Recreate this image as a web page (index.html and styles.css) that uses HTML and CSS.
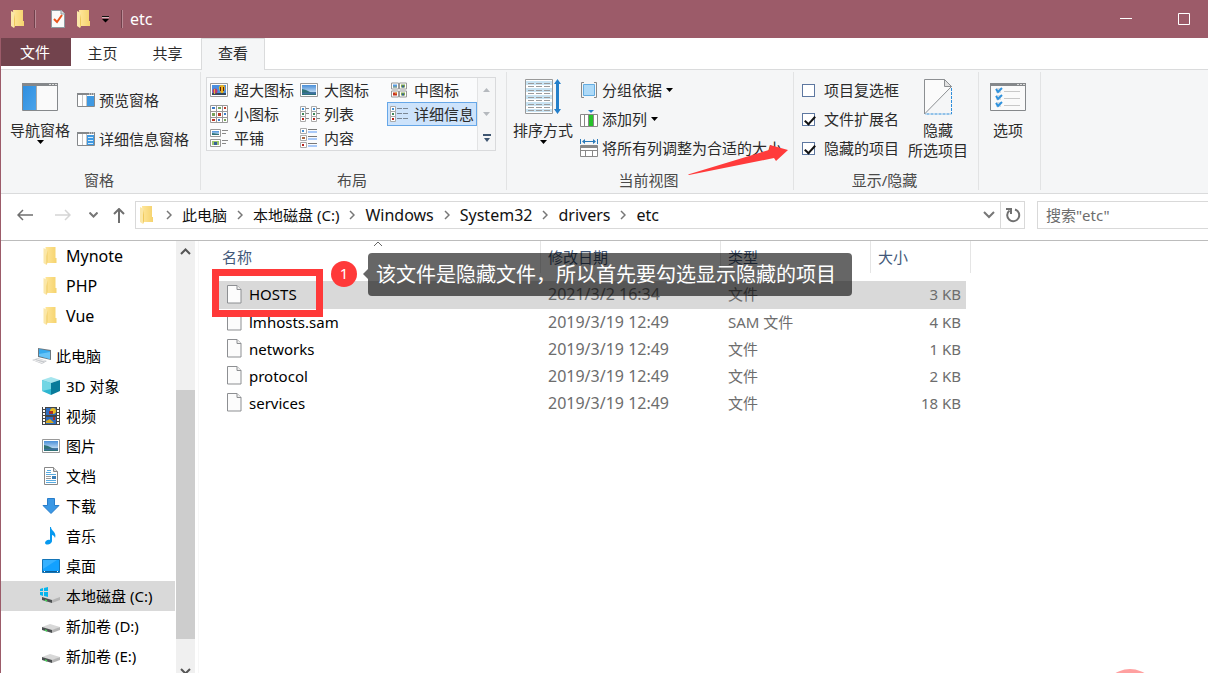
FILE: index.html
```
<!DOCTYPE html>
<html lang="zh-CN">
<head>
<meta charset="utf-8">
<title>etc</title>
<link rel="stylesheet" href="styles.css">
</head>
<body>
<svg class="defs" aria-hidden="true">
  <defs>
    <linearGradient id="gold" x1="0" x2="1" y1="0" y2="0"><stop offset="0" stop-color="#ffe69a"/><stop offset="1" stop-color="#f5d36e"/></linearGradient>
    <linearGradient id="sky" x1="0" x2="0" y1="0" y2="1"><stop offset="0" stop-color="#4a8fd8"/><stop offset="1" stop-color="#e8f4fb"/></linearGradient>
    <linearGradient id="blue" x1="0" x2="1" y1="0" y2="1"><stop offset="0" stop-color="#2f8fe0"/><stop offset="1" stop-color="#4aa3ea"/></linearGradient>
    <symbol id="folder" viewBox="0 0 13 18"><path d="M2 0h10v11h1v5H3z" fill="url(#gold)"/><path d="M0 1l4 2v13l-1 2-3-2z" fill="#fbe7a8"/><path d="M4 3v12l-1 3V9z" fill="#efc95c"/></symbol>
    <symbol id="file" viewBox="0 0 15 19"><path d="M.5.5h9.500l4 4v13.500H.5z" fill="#fcfcfc" stroke="#8d8f92"/><path d="M10 .5v4h4" fill="#eee" stroke="#8d8f92"/></symbol>
    <symbol id="picture" viewBox="0 0 18 14"><path d="M.5.5h17v13H.5z" fill="#fff" stroke="#999"/><path d="M2 2h14v10H2z" fill="url(#sky)"/><path d="M2 6l4 1 4 2 6 1v2H2z" fill="#2f7277"/><path d="M2 10l14-1v2H2z" fill="#3d6f9f"/></symbol>
    <symbol id="balloons" viewBox="0 0 18 14"><path d="M.5.5h17v13H.5z" fill="#fff" stroke="#999"/><path d="M2 2h14v10H2z" fill="#4a8fe0"/><path d="M2 10h14v2H2z" fill="#36475a"/><path d="M9 5q0-3 3-3t3 3q0 2-2 5h-2Q9 7 9 5z" fill="#edb21c"/><path d="M10 4h1v4h-1zM13 4h1v4h-1z" fill="#5a1f1a"/><circle cx="5" cy="8" r="2.500" fill="#c23c6b"/><path d="M4 6h1v5H4z" fill="#d7b53d"/></symbol>
    <symbol id="tile" viewBox="0 0 8 7"><path d="M.5.5h7v6h-7z" fill="#fff" stroke="#999"/><path d="M2 2h4v2H2z" fill="#559be3"/><path d="M2 4h4v1H2z" fill="#366f63"/></symbol>
    <symbol id="tilered" viewBox="0 0 8 7"><path d="M.5.5h7v6h-7z" fill="#fff" stroke="#999"/><path d="M2 2h4v3H2z" fill="#c6331e"/><path d="M4 2h2v1H4z" fill="#e6b93a"/></symbol>
    <symbol id="tilegreen" viewBox="0 0 8 7"><path d="M.5.5h7v6h-7z" fill="#fff" stroke="#999"/><path d="M2 2h4v3H2z" fill="#82aa4d"/><path d="M3 3h2v2H3z" fill="#365f98"/></symbol>
    <symbol id="medium" viewBox="0 0 18 16"><use href="#tile" x="1" y="0" width="8" height="8"/><use href="#tilegreen" x="9" y="0" width="8" height="8"/><use href="#tilered" x="1" y="8" width="8" height="8"/><use href="#tilegreen" x="9" y="8" width="8" height="8"/></symbol>
    <symbol id="small" viewBox="0 0 18 18"><path d="M.5.5h17v17H.5zM6.500 0v18M12.500 0v18M0 6.500h18M0 12.500h18" fill="#fff" stroke="#999"/><path d="M2 2h3v2H2zM14 8h2v2h-2zM8 14h2v2H8z" fill="#3b7bc7"/><path d="M8 2h3v2H8zM2 8h3v3H2zM14 14h2v2h-2z" fill="#76a35b"/><path d="M14 2h2v2h-2zM8 8h3v3H8zM2 14h3v2H2z" fill="#ba3928"/></symbol>
    <symbol id="list" viewBox="0 0 20 18"><path d="M.5 1.500h5v5h-5zM.5 6.500h5v5h-5zM.5 11.500h5v5h-5zM11.500 1.500h5v5h-5zM11.500 6.500h5v5h-5zM11.500 11.500h5v5h-5z" fill="#fff" stroke="#aaa"/><path d="M2 3h2v2H2zM13 3h2v2h-2z" fill="#438fd4"/><path d="M2 8h2v2H2zM13 8h2v2h-2z" fill="#41885a"/><path d="M2 13h2v2H2zM13 13h2v2h-2z" fill="#b8251c"/><path d="M6 3.500h3M6 8.500h3M6 13.500h3M17 3.500h3M17 8.500h3M17 13.500h3" stroke="#888"/></symbol>
    <symbol id="details" viewBox="0 0 18 18"><path d="M.5 1.500h5v5h-5zM.5 6.500h5v5h-5zM.5 11.500h5v5h-5z" fill="#fff" stroke="#aaa"/><path d="M2 3h2v2H2z" fill="#438fd4"/><path d="M2 8h2v2H2z" fill="#41885a"/><path d="M2 13h2v2H2z" fill="#b8251c"/><path d="M7 3.500h5M13 3.500h5M7 8.500h5M13 8.500h5M7 13.500h5M13 13.500h5" stroke="#7b8794"/></symbol>
    <symbol id="tiles" viewBox="0 0 18 20"><path d="M.5 1.500h10v7H.5zM.5 11.500h10v7H.5z" fill="#fff" stroke="#999"/><path d="M2 3h7v4H2z" fill="url(#sky)"/><path d="M2 5l7 1v1H2z" fill="#2f7277"/><path d="M2 13h7v4H2z" fill="#9cc46a"/><path d="M4 14h3v3H4z" fill="#365f98"/><path d="M12 2.500h6M12 5.500h4M12 12.500h6M12 15.500h4" stroke="#888"/></symbol>
    <symbol id="content" viewBox="0 0 18 20"><path d="M.5.500h6v5h-6zM.5 7.500h6v5h-6zM.5 14.500h6v5h-6z" fill="#fff" stroke="#aaa"/><path d="M2 2h2v2H2z" fill="#438fd4"/><path d="M2 9h3v2H2z" fill="#aa6a43"/><path d="M2 16h2v2H2z" fill="#b8251c"/><path d="M8 1.500h9M8 8.500h9M8 15.500h9" stroke="#777"/><path d="M8 4h9M8 11h9M8 18h9" stroke="#5697f5"/></symbol>
    <symbol id="crumb" viewBox="0 0 6 10"><path d="M1 1l4 4-4 4" fill="none" stroke="#777" stroke-width="1.500"/></symbol>
    <symbol id="caret" viewBox="0 0 7 4"><path d="M0 0h7L3.500 4z"/></symbol>
    <symbol id="drive" viewBox="0 0 18 12"><path d="M0 5l8-3 10 3-8 4z" fill="#d8d8d8"/><path d="M0 5l10 3v3L0 8z" fill="#4b4f50"/><path d="M10 8l8-3v3l-8 3z" fill="#b5b5b5"/><path d="M3 8l2 1" stroke="#48d05a" stroke-width="1.500"/></symbol>
  </defs>
</svg>
<div class="window">
  <header class="titlebar">
    <svg width="13" height="18"><use href="#folder"/></svg>
    <span class="divider"></span>
    <button class="quick" aria-label="属性"><svg width="14" height="18" viewBox="0 0 14 18"><path d="M.5.5h9.500l3.500 3.500v13.500H.5z" fill="#fafafa" stroke="#8f9aa0"/><path d="M10 0v4h4" fill="#d8dfe2" stroke="#8f9aa0"/><path d="M3 9l3 3 5-7" fill="none" stroke="#e8541d" stroke-width="2"/></svg></button>
    <button class="quick" aria-label="新建文件夹"><svg width="13" height="18"><use href="#folder"/></svg></button>
    <button class="quick customize" aria-label="自定义快速访问工具栏"><svg width="7" height="7" viewBox="0 0 7 7"><path d="M0 .5h7" stroke="#111"/><path d="M0 1.500h7" stroke="#d8b9bf"/><path d="M0 3h7L3.500 6.500z" fill="#000"/></svg></button>
    <span class="divider"></span>
    <h1 class="title">etc</h1>
    <div class="window-buttons">
      <button aria-label="最小化"><svg width="12" height="12" viewBox="0 0 12 12"><path d="M0 5.500h12" stroke="#fff"/></svg></button>
      <button aria-label="最大化"><svg width="12" height="12" viewBox="0 0 12 12"><path d="M.5.5h11v11H.5z" fill="none" stroke="#fff"/></svg></button>
    </div>
  </header>

  <nav class="tabs">
    <button class="tab file">文件</button>
    <button class="tab">主页</button>
    <button class="tab">共享</button>
    <button class="tab active">查看</button>
  </nav>

  <section class="ribbon">
    <div class="group panes">
      <div class="group-body">
        <button class="big">
          <svg width="36" height="36" viewBox="0 0 36 36"><path d="M.5 4.500h35v27H.5z" fill="#fafafa" stroke="#85888b"/><path d="M0 4h36v3H0z" fill="#85888b"/><path d="M27 5.500h2M30 5.500h2M33 5.500h2" stroke="#ddd"/><path d="M1 7h13v24H1z" fill="url(#blue)"/><path d="M14.500 7v24" stroke="#aaa"/></svg>
          <span>导航窗格</span><svg width="7" height="4"><use href="#caret"/></svg>
        </button>
        <div class="stack wide">
          <button class="small-button"><svg width="18" height="14" viewBox="0 0 18 14"><path d="M.5.5h17v13H.5z" fill="#fff" stroke="#85888b"/><path d="M0 0h18v2H0z" fill="#85888b"/><path d="M12 1h1M14 1h1M16 1h1" stroke="#eee"/><path d="M5.500 2v11M9.500 2v11" stroke="#c5c5c5"/><path d="M10 3h7v10h-7z" fill="#3f99e2"/></svg>预览窗格</button>
          <button class="small-button"><svg width="18" height="14" viewBox="0 0 18 14"><path d="M.5.5h17v13H.5z" fill="#fff" stroke="#85888b"/><path d="M0 0h18v2H0z" fill="#85888b"/><path d="M12 1h1M14 1h1M16 1h1" stroke="#eee"/><path d="M5.500 2v11M9.500 2v11" stroke="#c5c5c5"/><path d="M10 3h7v10h-7z" fill="#3f99e2"/><path d="M11 5.500h5M11 8.500h5M11 11.500h5" stroke="#d6ebfa"/></svg>详细信息窗格</button>
        </div>
      </div>
      <h2>窗格</h2>
    </div>

    <div class="group layout">
      <div class="group-body">
        <div class="gallery">
          <div class="gallery-items">
            <button><svg width="18" height="14"><use href="#balloons"/></svg>超大图标</button>
            <button><svg width="18" height="14"><use href="#picture"/></svg>大图标</button>
            <button><svg width="18" height="16"><use href="#medium"/></svg>中图标</button>
            <button><svg width="18" height="18"><use href="#small"/></svg>小图标</button>
            <button class="overhang"><svg width="20" height="18"><use href="#list"/></svg>列表</button>
            <button class="chosen"><svg width="18" height="18"><use href="#details"/></svg>详细信息</button>
            <button><svg width="18" height="20"><use href="#tiles"/></svg>平铺</button>
            <button><svg width="18" height="20"><use href="#content"/></svg>内容</button>
          </div>
          <div class="gallery-scroll">
            <button aria-label="向上"><svg width="7" height="4" viewBox="0 0 7 4"><path d="M0 4h7L3.500 0z" fill="#b5b9be"/></svg></button>
            <button aria-label="向下"><svg width="7" height="4" viewBox="0 0 7 4"><path d="M0 0h7L3.500 4z" fill="#b5b9be"/></svg></button>
            <button aria-label="更多"><svg width="8" height="8" viewBox="0 0 8 8"><path d="M0 0h8v2H0zM1 4h6L4 8z" fill="#3f5671"/></svg></button>
          </div>
        </div>
      </div>
      <h2>布局</h2>
    </div>

    <div class="group current">
      <div class="group-body">
        <button class="big">
          <svg width="36" height="36" viewBox="0 0 36 36"><path d="M.5.5h27v34H.5z" fill="#fff" stroke="#999"/><path d="M1 2h26v4H1zM1 9h26v4H1zM1 16h26v4H1zM1 23h26v4H1zM1 30h26v3H1z" fill="#c9e4f3"/><path d="M3 4.500h22M3 7.500h22M3 11.500h22M3 14.500h22M3 18.500h22M3 21.500h22M3 25.500h22M3 28.500h22M3 31.500h22" stroke="#9c9c9c" stroke-dasharray="6 2"/><path d="M32.500 3v29" stroke="#237fca" stroke-width="3"/><path d="M29 5l3.500-5L36 5zM29 30l3.500 5 3.500-5z" fill="#237fca"/></svg>
          <span>排序方式</span><svg width="7" height="4"><use href="#caret"/></svg>
        </button>
        <div class="stack">
          <button class="small-button"><svg width="18" height="18" viewBox="0 0 18 18"><path d="M4 1.500H1.500v15H4M14 1.500h2.500v15H14" fill="none" stroke="#888"/><path d="M3.500 3.500h11v11h-11z" fill="#aedaf8" stroke="#63ade2"/></svg>分组依据<svg width="7" height="4"><use href="#caret"/></svg></button>
          <button class="small-button"><svg width="18" height="18" viewBox="0 0 18 18"><path d="M.5 4.500h17v12H.5zM4.500 4v13M8.500 4v13M13.500 4v13" fill="#fff" stroke="#888"/><path d="M9 5h4v11H9z" fill="#26c32a"/><path d="M8 0h6l-3 3z" fill="#287fc9"/></svg>添加列<svg width="7" height="4"><use href="#caret"/></svg></button>
          <button class="small-button"><svg width="18" height="18" viewBox="0 0 18 18"><path d="M.5 0v5M17.500 0v5M3 2.500h12" stroke="#2879b9"/><path d="M2 2.500L5 0v5zM16 2.500L13 0v5z" fill="#2879b9"/><path d="M.5 6.500h17v11H.5z" fill="#fff" stroke="#888"/><path d="M0 8h18" stroke="#888" stroke-width="2"/><path d="M5.500 11v7M12.500 11v7M1 11.500h16" stroke="#888"/></svg>将所有列调整为合适的大小</button>
        </div>
      </div>
      <h2>当前视图</h2>
    </div>

    <div class="group visibility">
      <div class="group-body">
        <div class="stack checks">
          <label><input type="checkbox">项目复选框</label>
          <label><input type="checkbox" checked>文件扩展名</label>
          <label><input type="checkbox" checked>隐藏的项目</label>
        </div>
        <button class="big">
          <svg width="30" height="36" viewBox="0 0 30 36"><path d="M1.500 35V.5h20l7 7z" fill="#fbfbfb" stroke="#8c8f92"/><path d="M21.500.5v7h7z" fill="#e2e2e2" stroke="#8c8f92"/><path d="M28.500 9v26H2" fill="none" stroke="#2f8edb" stroke-dasharray="3 1"/></svg>
          <span>隐藏</span><span>所选项目</span>
        </button>
      </div>
      <h2>显示/隐藏</h2>
    </div>

    <div class="group options">
      <div class="group-body">
        <button class="big">
          <svg width="36" height="36" viewBox="0 0 36 36"><path d="M.5 4.500h35v27H.5z" fill="#fafafa" stroke="#85888b"/><path d="M0 4h36v3H0z" fill="#85888b"/><path d="M27 5.500h2M30 5.500h2M33 5.500h2" stroke="#ddd"/><path d="M6 9h5v5H6zM6 16h5v5H6zM6 23h5v5H6z" fill="#d5dde4"/><path d="M6 10l2 3 4-4M6 17l2 3 4-4M6 24l2 3 4-4" fill="none" stroke="#2e92de" stroke-width="2"/><path d="M14 12.500h16M14 19.500h16M14 26.500h16" stroke="#c8c8c8"/></svg>
          <span>选项</span>
        </button>
      </div>
    </div>
  </section>

  <div class="location">
    <div class="history">
      <button aria-label="后退"><svg width="16" height="12" viewBox="0 0 16 12"><path d="M16 6H1M6 1L1 6l5 5" fill="none" stroke="#6f6f6f" stroke-width="1.500"/></svg></button>
      <button aria-label="前进"><svg width="16" height="12" viewBox="0 0 16 12"><path d="M0 6h15M10 1l5 5-5 5" fill="none" stroke="#d5d5d5" stroke-width="1.500"/></svg></button>
      <button class="recent" aria-label="最近浏览的位置"><svg width="9" height="6" viewBox="0 0 9 6"><path d="M.5.5l4 4 4-4" fill="none" stroke="#777" stroke-width="2"/></svg></button>
      <button class="up" aria-label="向上"><svg width="12" height="15" viewBox="0 0 12 15"><path d="M6 15V1M1 6l5-5 5 5" fill="none" stroke="#6f6f6f" stroke-width="2"/></svg></button>
    </div>
    <div class="address">
      <svg width="13" height="18"><use href="#folder"/></svg>
      <svg class="sep first" width="6" height="10"><use href="#crumb"/></svg>
      <a href="#">此电脑</a><svg class="sep" width="6" height="10"><use href="#crumb"/></svg>
      <a href="#">本地磁盘 (C:)</a><svg class="sep" width="6" height="10"><use href="#crumb"/></svg>
      <a href="#" class="latin">Windows</a><svg class="sep" width="6" height="10"><use href="#crumb"/></svg>
      <a href="#" class="latin">System32</a><svg class="sep" width="6" height="10"><use href="#crumb"/></svg>
      <a href="#" class="latin">drivers</a><svg class="sep" width="6" height="10"><use href="#crumb"/></svg>
      <a href="#" class="latin">etc</a>
      <button class="drop" aria-label="上一个位置"><svg width="12" height="8" viewBox="0 0 12 8"><path d="M1 1l5 5 5-5" fill="none" stroke="#777" stroke-width="2"/></svg></button>
      <button class="refresh" aria-label="刷新"><svg width="16" height="16" viewBox="0 0 16 16"><path d="M10 2.500A6 6 0 1 1 4.500 3.500" fill="none" stroke="#707070" stroke-width="2"/><path d="M1 2h5v5" fill="none" stroke="#707070" stroke-width="2"/></svg></button>
    </div>
    <input class="search" type="text" placeholder='搜索"etc"' aria-label="搜索">
  </div>

  <main class="content">
    <nav class="tree">
      <a href="#" class="latin"><svg width="18" height="18"><use href="#folder" x="-1"/></svg>Mynote</a>
      <a href="#" class="latin"><svg width="18" height="18"><use href="#folder" x="-1"/></svg>PHP</a>
      <a href="#" class="latin"><svg width="18" height="18"><use href="#folder" x="-1"/></svg>Vue</a>
      <a href="#" class="root"><svg width="20" height="18" viewBox="0 0 20 18"><path d="M6 1l13 2v10L6 10z" fill="#6d7880"/><path d="M7 2l11 2v8L7 9z" fill="#35a9ee"/><path d="M7 7l11-2v7L7 9z" fill="#67c4f8"/><path d="M0 13l6-2 9 3-5 3z" fill="#c6c9cd"/><path d="M2 13l9 3M5 12l8 2" stroke="#eee"/></svg>此电脑</a>
      <a href="#"><svg width="18" height="18" viewBox="0 0 18 18"><path d="M9 0l9 3-9 3-9-3z" fill="#a5e5ee"/><path d="M0 3l9 3v12l-9-4z" fill="#2eb6d0"/><path d="M18 3L9 6v12l9-4z" fill="#087b9a"/><path d="M0 3l9 3v6l-9 2z" fill="#72d6e4"/></svg>3D 对象</a>
      <a href="#"><svg width="18" height="18" viewBox="0 0 18 18"><path d="M0 0h18v18H0z" fill="#454545"/><path d="M2 0v18M16 0v18" stroke="#fff" stroke-width="2" stroke-dasharray="2 1"/><path d="M4 1h10v7H4zM4 10h10v7H4z" fill="#2e6ec1"/><circle cx="11" cy="4" r="3" fill="#eabb22"/><path d="M7 4h4v3H7zM11 10h2v3h-2z" fill="#a62e27"/><path d="M4 14l4-2 4 4H4z" fill="#d7aa25"/></svg>视频</a>
      <a href="#"><svg width="18" height="14"><use href="#picture"/></svg>图片</a>
      <a href="#"><svg width="18" height="18" viewBox="0 0 18 18"><path d="M2.500.5h9l4 4v13h-13z" fill="#fff" stroke="#888"/><path d="M11.500.5v4h4" fill="#ddd" stroke="#888"/><path d="M4 5.500h5M5 3.500h4M4 7.500h10M4 13.500h10M4 15.500h10" stroke="#5aabe0"/><path d="M4 9.500h5M4 11.500h5" stroke="#999"/><path d="M10 9h4v3h-4z" fill="#3b7fb7"/></svg>文档</a>
      <a href="#"><svg width="18" height="18" viewBox="0 0 18 18"><path d="M5.500 1.500h7v7H17l-8 8-8-8h4.500z" fill="#3b98e5" stroke="#287dca"/></svg>下载</a>
      <a href="#"><svg width="18" height="18" viewBox="0 0 18 18"><path d="M9 0c0 4 6 5 4 11-1-3-3-3-3-3v6c0 3-6 5-7 2 0-2 3-4 5-3V0z" fill="#0799ef"/></svg>音乐</a>
      <a href="#"><svg width="18" height="14" viewBox="0 0 18 14"><path d="M.5.5h17v13H.5z" fill="#12a1ff" stroke="#1475b7"/><path d="M1 10L15 1H1z" fill="#36b1ff"/><path d="M1 12.500h16" stroke="#0d5e97"/><path d="M2 12.500h1M15 12.500h1" stroke="#fff"/></svg>桌面</a>
      <a href="#" class="selected"><svg width="20" height="18" viewBox="0 0 20 18"><use href="#drive" x="2" y="5" width="18" height="12"/><path d="M0 2l3-1v3H0zM4 1l4-1v4H4zM0 5h3v4L0 8zM4 5h4v5L4 9z" fill="#05b5ed"/></svg>本地磁盘 (C:)</a>
      <a href="#"><svg width="18" height="18" viewBox="0 0 18 18"><use href="#drive" x="0" y="5" width="18" height="12"/></svg>新加卷 (D:)</a>
      <a href="#"><svg width="18" height="18" viewBox="0 0 18 18"><use href="#drive" x="0" y="5" width="18" height="12"/></svg>新加卷 (E:)</a>
    </nav>
    <div class="scrollbar">
      <svg width="11" height="7" viewBox="0 0 11 7"><path d="M1 6l4.500-4.500L10 6" fill="none" stroke="#555" stroke-width="2"/></svg>
      <span class="thumb"></span>
      <svg width="11" height="7" viewBox="0 0 11 7"><path d="M1 1l4.500 4.500L10 1" fill="none" stroke="#555" stroke-width="2"/></svg>
    </div>
    <div class="files">
      <table>
        <colgroup><col class="col-name"><col class="col-date"><col class="col-type"><col class="col-size"></colgroup>
        <thead><tr><th>名称<svg class="sort" width="10" height="6" viewBox="0 0 10 6"><path d="M1 5l4-4 4 4" fill="none" stroke="#666"/></svg></th><th>修改日期</th><th>类型</th><th>大小</th></tr></thead>
        <tbody>
          <tr class="picked"><td><span class="name"><svg width="15" height="19"><use href="#file"/></svg>HOSTS</span></td><td class="latin">2021/3/2 16:34</td><td>文件</td><td>3 KB</td></tr>
          <tr><td><span class="name"><svg width="15" height="19"><use href="#file"/></svg>lmhosts.sam</span></td><td class="latin">2019/3/19 12:49</td><td>SAM 文件</td><td>4 KB</td></tr>
          <tr><td><span class="name"><svg width="15" height="19"><use href="#file"/></svg>networks</span></td><td class="latin">2019/3/19 12:49</td><td>文件</td><td>1 KB</td></tr>
          <tr><td><span class="name"><svg width="15" height="19"><use href="#file"/></svg>protocol</span></td><td class="latin">2019/3/19 12:49</td><td>文件</td><td>2 KB</td></tr>
          <tr><td><span class="name"><svg width="15" height="19"><use href="#file"/></svg>services</span></td><td class="latin">2019/3/19 12:49</td><td>文件</td><td>18 KB</td></tr>
        </tbody>
      </table>
    </div>
  </main>

  <svg class="pointer" width="102" height="32" viewBox="0 0 102 32"><path d="M1 30.500L82 6l1-5 18 5-12 11-2-3L2 31z" fill="#ff3b3b"/></svg>
  <div class="mark"></div>
  <div class="step">1</div>
  <div class="tip">该文件是隐藏文件，所以首先要勾选显示隐藏的项目</div>
  <div class="bubble"></div>
</div>
</body>
</html>
```

FILE: styles.css
```
* { box-sizing: border-box; }

body {
  margin: 0;
  font: 15px/20px "Noto Sans", "Noto Sans CJK SC", sans-serif;
  color: #2b2b2b;
  background: #fff;
}

button {
  display: flex;
  align-items: center;
  justify-content: center;
  padding: 0;
  border: 0;
  background: none;
  color: inherit;
  font: inherit;
  white-space: nowrap;
}

a { color: inherit; text-decoration: none; }
svg { display: block; flex: none; }
.defs { position: absolute; width: 0; height: 0; }
.latin { font-size: 16px; }

.window {
  position: relative;
  display: flex;
  flex-direction: column;
  height: 100vh;
  overflow: hidden;
  border-left: 1px solid #9c5b69;
}

/* Title bar */
.titlebar {
  display: flex;
  align-items: center;
  flex: none;
  height: 38px;
  padding-left: 10px;
  background: #9c5b69;
  color: #fff;
}
.divider { width: 2px; height: 18px; margin-left: 10px; border-left: 1px solid #71414c; border-right: 1px solid #b98a94; }
.quick { margin-left: 12px; }
.divider + .quick { margin-left: 15px; }
.customize + .divider { margin-left: 12px; }
.title { margin: 0 0 0 7px; font-size: 16px; font-weight: 400; }
.window-buttons { display: flex; gap: 10px; margin-left: auto; }
.window-buttons button { width: 48px; height: 38px; }

/* Tabs */
.tabs {
  display: flex;
  flex: none;
  height: 32px;
  border-bottom: 1px solid #dadbdc;
}
.tab { width: 65px; height: 30px; padding-right: 2px; }
.tab.file { width: 70px; height: 28px; background: #72434d; color: #fff; }
.tab.active { width: 64px; height: 32px; padding: 0 0 4px; border: 1px solid #dadbdc; border-bottom: 0; background: #f5f6f7; }

/* Ribbon */
.ribbon {
  display: flex;
  flex: none;
  height: 124px;
  padding: 2px 0 3px;
  border-bottom: 1px solid #dadbdc;
  background: #f5f6f7;
}
.group { display: flex; flex-direction: column; flex: none; border-right: 1px solid #e2e3e4; }
.group-body { display: flex; flex: 1; }
.group h2 { margin: 0; padding-right: 3px; font-size: 15px; font-weight: 400; line-height: 20px; text-align: center; color: #4a4a4a; }
.panes { width: 200px; }
.layout { width: 306px; }
.current { width: 287px; }
.visibility { width: 185px; }
.options { width: 62px; }

.big { flex-direction: column; justify-content: flex-start; align-self: flex-start; padding-top: 7px; }
.big > svg:first-child { margin-bottom: 5px; }
.panes .big { margin-left: 9px; }
.current .big { margin-left: 6px; }
.options .big { margin-left: 11px; }

.stack { display: flex; flex-direction: column; align-items: flex-start; gap: 9px; padding-top: 8px; margin-left: 7px; }
.stack.wide { gap: 19px; padding-top: 18px; }
.small-button { gap: 4px; height: 20px; }

.checks { margin-left: 8px; margin-right: 9px; }
.checks label { display: flex; align-items: center; gap: 9px; height: 20px; white-space: nowrap; }
.checks input {
  appearance: none;
  position: relative;
  width: 13px;
  height: 13px;
  margin: 0;
  border: 1px solid #5d77a0;
  background: #fff;
}
.checks input:checked::after {
  content: "";
  position: absolute;
  left: 4px;
  top: 0;
  width: 4px;
  height: 9px;
  border: solid #111;
  border-width: 0 2px 2px 0;
  transform: rotate(42deg);
}

.gallery { display: flex; align-self: flex-start; margin: 5px 0 0 5px; border: 1px solid #d9dadc; background: #fafbfc; }
.gallery-items { display: grid; grid-template-columns: repeat(3, 90px); grid-auto-rows: 24px; }
.gallery-items button { justify-content: flex-start; gap: 6px; padding-left: 2px; border: 1px solid transparent; }
.gallery-items .overhang { gap: 4px; }
.gallery-items .chosen { border-color: #66a7e8; background: #cde3fb; }
.gallery-scroll { display: grid; width: 18px; grid-template-rows: repeat(3, 24px); border-left: 1px solid #e2e3e4; background: #f5f6f7; }

/* Location bar */
.location {
  display: flex;
  flex: none;
  align-items: center;
  height: 47px;
  padding-bottom: 4px;
  border-bottom: 1px solid #bcbcbc;
}
.history { display: flex; flex: none; width: 134px; height: 28px; padding-left: 16px; }
.history button { width: 16px; }
.history button + button { margin-left: 22px; }
.history button.recent { width: 9px; margin-left: 18px; }
.history button.up { width: 12px; margin-left: 15px; }
.address {
  display: flex;
  flex: 1;
  align-items: center;
  height: 28px;
  padding-left: 4px;
  border: 1px solid #d9d9d9;
  color: #111;
}
.address a { white-space: nowrap; }
.sep { margin: 0 10px; }
.sep.first { margin-left: 13px; }
.drop { width: 22px; height: 26px; margin-left: auto; }
.refresh { width: 24px; height: 26px; border-left: 1px solid #d9d9d9; }
.search {
  flex: none;
  width: 171px;
  height: 28px;
  margin-left: 12px;
  padding: 0 8px;
  border: 1px solid #d9d9d9;
  border-right: 0;
  background: #fff;
  font: inherit;
}
.search::placeholder { color: #6d6d6d; opacity: 1; }

/* Folder tree */
.content { display: flex; flex: 1; min-height: 0; overflow: hidden; }
.tree { flex: none; width: 174px; color: #000; }
.tree a { display: flex; align-items: center; gap: 6px; height: 30px; padding-left: 41px; white-space: nowrap; }
.tree .root { gap: 4px; margin-top: 10px; padding-left: 31px; }
.tree .selected { padding-left: 39px; background: #d9d9d9; }
.scrollbar {
  display: flex;
  flex: none;
  flex-direction: column;
  align-items: center;
  width: 19px;
  margin-left: 1px;
  padding-top: 7px;
  background: #f0f0f0;
}
.thumb { flex: none; width: 19px; height: 249px; margin: 135px 0 29px; background: #cdcdcd; }

/* File list */
.files { flex: 1; margin-left: 3px; padding-left: 14px; border-left: 1px solid #f7f7f7; }
table { width: 758px; table-layout: fixed; border-spacing: 0; }
.col-name { width: 328px; }
.col-date { width: 180px; }
.col-type { width: 150px; }
.col-size { width: 100px; }
th { position: relative; height: 32px; padding: 0 8px 0 7px; border-right: 1px solid #e5e5e5; font-weight: 400; text-align: left; color: #43597a; }
th:first-child { padding-left: 9px; }
.sort { position: absolute; left: 49%; top: 0; }
tbody::before { content: ""; display: block; height: 8px; }
td { height: 27px; padding: 0 0 2px 7px; color: #6d6d6d; white-space: nowrap; }
td:first-child { padding-left: 14px; }
td:last-child { padding-right: 5px; border-right: 5px solid transparent; background-clip: padding-box; text-align: right; }
.name { display: flex; align-items: center; gap: 7px; color: #000; }
.picked td { height: 28px; background-color: #d9d9d9; }

/* Annotations */
.pointer { position: absolute; left: 686px; top: 144px; }
.mark { position: absolute; left: 211px; top: 269px; width: 111px; height: 48px; border: 7px solid #ff3939; }
.step {
  position: absolute;
  left: 330px;
  top: 261px;
  width: 26px;
  height: 26px;
  border-radius: 50%;
  background: #ff3939;
  color: #fff;
  font-size: 15px;
  line-height: 24px;
  text-align: center;
}
.tip {
  position: absolute;
  left: 367px;
  top: 253px;
  padding: 1px 16px 0 8px;
  border-radius: 4px;
  background: rgba(0, 0, 0, 0.6);
  color: #fff;
  font-size: 20px;
  line-height: 42px;
  white-space: nowrap;
}
.tip::before {
  content: "";
  position: absolute;
  left: -5px;
  top: 16px;
  border: solid transparent;
  border-width: 5px 5px 5px 0;
  border-right-color: rgba(0, 0, 0, 0.6);
}
.bubble { position: absolute; right: 50px; bottom: -52px; width: 56px; height: 56px; border-radius: 50%; background: #ffa0a0; }
```
